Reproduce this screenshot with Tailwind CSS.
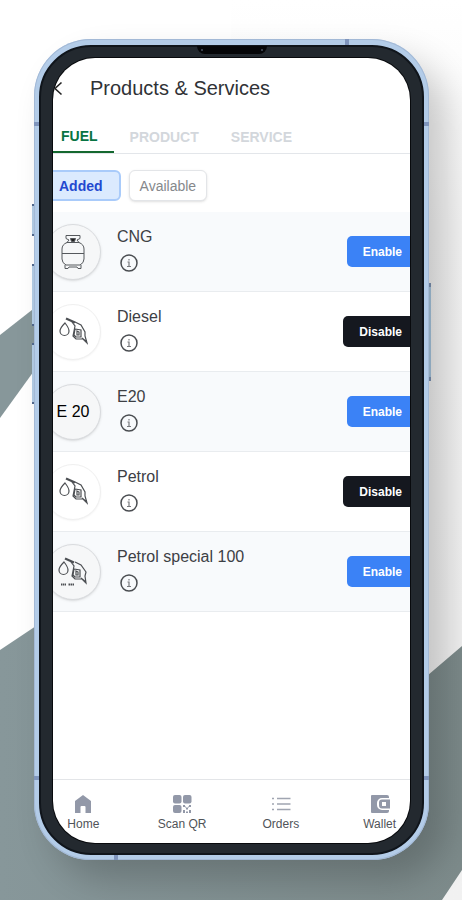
<!DOCTYPE html>
<html lang="en">
<head>
<meta charset="utf-8">
<meta name="viewport" content="width=device-width, initial-scale=1">
<title>Products &amp; Services</title>
<script src="https://cdn.jsdelivr.net/npm/@tailwindcss/browser@4"></script>
</head>
<body class="relative min-h-screen overflow-x-hidden bg-white font-['Liberation_Sans',Arial,sans-serif] text-[#3d4045]">
<svg class="absolute inset-0 h-full w-full" viewBox="0 0 462 900" preserveAspectRatio="none" aria-hidden="true">
  <defs>
    <linearGradient id="page" x1="0" y1="0" x2="0" y2="1"><stop offset="0" stop-color="#fff"/><stop offset="0.25" stop-color="#f6f6f6"/><stop offset="1" stop-color="#f1f1f1"/></linearGradient>
    <linearGradient id="band" x1="0" y1="0" x2="1" y2="0"><stop offset="0" stop-color="#87979a"/><stop offset="1" stop-color="#7d8b8b"/></linearGradient>
  </defs>
  <rect x="231" width="231" height="900" fill="url(#page)"/>
  <path d="M0 335L60 288V335L0 418Z" fill="#87979a"/>
  <path d="M0 650L60 610H400V699L462 646V870L442 900H0Z" fill="url(#band)"/>
</svg>

<main class="relative flex min-h-screen pt-[39px] pr-[33px] pb-10 pl-[34px]">
  <!-- Side keys -->
  <span class="absolute top-[204px] left-8 h-8 w-[3px] border-y-2 border-[#52698f] bg-[#b4cde6]"></span>
  <span class="absolute top-[264px] left-8 h-[62px] w-[3px] border-y-2 border-[#52698f] bg-[#b4cde6]"></span>
  <span class="absolute top-[343px] left-8 h-[61px] w-[3px] border-y-2 border-[#52698f] bg-[#b4cde6]"></span>
  <span class="absolute top-[283px] right-[31px] h-[98px] w-[3px] border-y-4 border-[#7d94b5] bg-[#a9c8e2]"></span>

  <div class="relative flex flex-1 rounded-[57px] bg-[#b3cce8] p-[5px] pt-[6px] shadow-[18px_20px_36px_rgba(0,0,0,0.2)] ring-1 ring-[#a3b9d6] ring-inset">
    <!-- Antenna lines -->
    <span class="absolute top-[83px] left-0 h-1 w-full bg-[#7f95bd]"></span>
    <span class="absolute bottom-20 left-0 h-1 w-full bg-[#7f95bd]"></span>
    <span class="absolute top-0 right-20 h-2 w-1 bg-[#7f95bd]"></span>
    <span class="absolute bottom-0 left-20 h-2 w-1 bg-[#7f95bd]"></span>

    <div class="relative flex flex-1 rounded-[52px] border-2 border-[#10151b] bg-[#23292f] px-3 pt-[11px] pb-[10px]">
      <!-- Speaker and sensors -->
      <div class="absolute -top-px left-1/2 flex h-2 w-[70px] -translate-x-1/2 items-center justify-between rounded-b-lg bg-[#050608] px-1">
        <span class="size-[2px] rounded-full bg-[#4b5563]"></span><span class="size-[2px] rounded-full bg-[#4b5563]"></span>
      </div>

      <div class="flex flex-1 flex-col overflow-hidden rounded-[42px] bg-white ring-1 ring-[#080a0d]">
        <div class="-mx-2 flex flex-1 flex-col">
          <header class="flex h-[60px] items-center">
            <button type="button" aria-label="Back" class="flex w-[45px] justify-start pl-1">
              <svg class="size-4" viewBox="0 0 16 16" fill="none" stroke="#222" stroke-width="1.6"><path d="M12.500 2.500L6 8.500L12.500 14.500"/></svg>
            </button>
            <h1 class="text-xl text-[#303236]">Products &amp; Services</h1>
          </header>

          <nav aria-label="Categories" class="flex h-9 border-b border-[#e3e6ea] text-sm font-bold text-[#d3d7dc]">
            <a href="#fuel" aria-current="page" class="flex items-center border-b-2 border-[#14682f] px-4 pt-[3px] text-[#087443]">FUEL</a>
            <a href="#product" class="flex items-center px-4 pt-[3px]">PRODUCT</a>
            <a href="#service" class="flex items-center px-4 pt-[3px]">SERVICE</a>
          </nav>

          <div class="flex gap-2 pt-4 pb-[11px] text-sm">
            <button type="button" class="h-[31px] rounded-md border-2 border-[#a9cbfa] bg-[#dbeafe] pr-4 pl-3 font-bold text-[#2348cf]">Added</button>
            <button type="button" class="h-[31px] rounded-md border border-[#e3e5e8] bg-white px-[10px] text-[#85888c] shadow-sm">Available</button>
          </div>

          <ul>
            <li class="flex h-20 items-center gap-4 border-b border-[#e9ecef] bg-[#f8fafc]">
              <span class="flex size-14 shrink-0 items-center justify-center rounded-full border border-[#d9dbde] bg-[#f6f7f8] shadow-sm">
                <svg class="h-9 w-7" viewBox="0 0 28 36" fill="none" stroke="#55585c" stroke-width="1"><path d="M7 1.500h14v3l-3 1.500 2 2.500H8l2-2.500-3-1.500ZM8 8.500Q3 10.500 3 15v10q0 4 4 6h14q4-2 4-6v-10q0-4.500-5-6.500M3 19.500h22M6 31v3.500h3l1-1.500h8l1 1.500h3v-3.500"/><path d="M11.500 4.500h5l-1 3h-3Z" fill="#222"/></svg>
              </span>
              <div class="flex flex-1 flex-col gap-1 pb-[6px]">
                <h2 class="text-base">CNG</h2>
                <button type="button" aria-label="About CNG" class="ml-[2px] size-5"><svg class="size-5" viewBox="0 0 20 20" fill="none" stroke="#4a4d51" stroke-width="1.5"><circle cx="10" cy="10" r="8"/><path d="M8.500 9H10v4.500M8 13.500h4M10 6v1.500" stroke="#77797d" stroke-width="1.200"/></svg></button>
              </div>
              <button type="button" class="h-[31px] rounded-[5px] bg-[#3b82f6] px-4 text-xs font-bold text-white">Enable</button>
            </li>

            <li class="flex h-20 items-center gap-4 border-b border-[#e9ecef] bg-white">
              <span class="flex size-14 shrink-0 items-center justify-center rounded-full border border-[#f0f0f0] bg-white shadow-xs">
                <svg class="h-8 w-8" viewBox="0 0 32 32" fill="none" stroke="#4c4f53" stroke-width="1.200"><path d="M8 7Q3 12 3 15a4.500 4.500 0 0 0 9 0Q12 12 8 7Z"/><path d="M9 2.500l9 4" stroke-width="2.200"/><path d="M15 6l3 4-2 10 3 3 7 0 4 4-2-7 0-4-4-7-6-3M18 13l6 1 0 7-5 0-2-2ZM20 15l2 1v3h-2ZM25 22l5 4"/></svg>
              </span>
              <div class="flex flex-1 flex-col gap-1 pb-[6px]">
                <h2 class="text-base">Diesel</h2>
                <button type="button" aria-label="About Diesel" class="ml-[2px] size-5"><svg class="size-5" viewBox="0 0 20 20" fill="none" stroke="#4a4d51" stroke-width="1.5"><circle cx="10" cy="10" r="8"/><path d="M8.500 9H10v4.500M8 13.500h4M10 6v1.500" stroke="#77797d" stroke-width="1.200"/></svg></button>
              </div>
              <button type="button" class="h-[31px] rounded-[5px] bg-[#15181f] px-4 text-xs font-bold text-white">Disable</button>
            </li>

            <li class="flex h-20 items-center gap-4 border-b border-[#e9ecef] bg-[#f8fafc]">
              <span class="flex size-14 shrink-0 items-center justify-center rounded-full border border-[#d9dbde] bg-[#f6f7f8] text-base whitespace-nowrap text-black shadow-sm">E 20</span>
              <div class="flex flex-1 flex-col gap-1 pb-[6px]">
                <h2 class="text-base">E20</h2>
                <button type="button" aria-label="About E20" class="ml-[2px] size-5"><svg class="size-5" viewBox="0 0 20 20" fill="none" stroke="#4a4d51" stroke-width="1.5"><circle cx="10" cy="10" r="8"/><path d="M8.500 9H10v4.500M8 13.500h4M10 6v1.500" stroke="#77797d" stroke-width="1.200"/></svg></button>
              </div>
              <button type="button" class="h-[31px] rounded-[5px] bg-[#3b82f6] px-4 text-xs font-bold text-white">Enable</button>
            </li>

            <li class="flex h-20 items-center gap-4 border-b border-[#e9ecef] bg-white">
              <span class="flex size-14 shrink-0 items-center justify-center rounded-full border border-[#f0f0f0] bg-white shadow-xs">
                <svg class="h-8 w-8" viewBox="0 0 32 32" fill="none" stroke="#4c4f53" stroke-width="1.200"><path d="M8 7Q3 12 3 15a4.500 4.500 0 0 0 9 0Q12 12 8 7Z"/><path d="M9 2.500l9 4" stroke-width="2.200"/><path d="M15 6l3 4-2 10 3 3 7 0 4 4-2-7 0-4-4-7-6-3M18 13l6 1 0 7-5 0-2-2ZM20 15l2 1v3h-2ZM25 22l5 4"/></svg>
              </span>
              <div class="flex flex-1 flex-col gap-1 pb-[6px]">
                <h2 class="text-base">Petrol</h2>
                <button type="button" aria-label="About Petrol" class="ml-[2px] size-5"><svg class="size-5" viewBox="0 0 20 20" fill="none" stroke="#4a4d51" stroke-width="1.5"><circle cx="10" cy="10" r="8"/><path d="M8.500 9H10v4.500M8 13.500h4M10 6v1.500" stroke="#77797d" stroke-width="1.200"/></svg></button>
              </div>
              <button type="button" class="h-[31px] rounded-[5px] bg-[#15181f] px-4 text-xs font-bold text-white">Disable</button>
            </li>

            <li class="flex h-20 items-center gap-4 border-b border-[#e9ecef] bg-[#f8fafc]">
              <span class="flex size-14 shrink-0 flex-col items-center justify-center rounded-full border border-[#d9dbde] bg-[#f6f7f8] shadow-sm">
                <svg class="h-8 w-8" viewBox="0 0 32 32" fill="none" stroke="#4c4f53" stroke-width="1.200"><path d="M7 6Q2 11 2 14a4.500 4.500 0 0 0 9 0Q11 11 7 6Z"/><path d="M8 2.500l9 4" stroke-width="2.200"/><path d="M14 6l3 4-2 10 3 3 7 0 4 4-1-7 1-4-5-7-6-3M17 13l6 1 0 7-5 0-2-2ZM19 15l2 1v3h-2ZM24 22l5 4"/><path d="M4 28.500h5M11.500 28.500h6" stroke-width="2" stroke-dasharray="1.500 0.500"/></svg>
              </span>
              <div class="flex flex-1 flex-col gap-1 pb-[6px]">
                <h2 class="text-base">Petrol special 100</h2>
                <button type="button" aria-label="About Petrol special 100" class="ml-[2px] size-5"><svg class="size-5" viewBox="0 0 20 20" fill="none" stroke="#4a4d51" stroke-width="1.5"><circle cx="10" cy="10" r="8"/><path d="M8.500 9H10v4.500M8 13.500h4M10 6v1.500" stroke="#77797d" stroke-width="1.200"/></svg></button>
              </div>
              <button type="button" class="h-[31px] rounded-[5px] bg-[#3b82f6] px-4 text-xs font-bold text-white">Enable</button>
            </li>
          </ul>

          <nav aria-label="Main" class="-mx-[11px] mt-auto grid h-16 grid-cols-4 border-t border-[#e3e5e8] pt-[14px] text-xs text-[#505358]">
            <a href="#home" class="flex flex-col items-center gap-[2px]">
              <svg class="size-5" viewBox="0 0 20 20" fill="#9298a8"><path d="M10 1L18 7V19H12.500V13a1 1 0 0 0-1-1h-3a1 1 0 0 0-1 1v6H2V7Z"/></svg>Home
            </a>
            <a href="#scan" class="flex flex-col items-center gap-[2px]">
              <svg class="size-5" viewBox="0 0 20 20" fill="#9298a8"><rect x="1" y="1" width="8.500" height="8.500" rx="2"/><rect x="11" y="1" width="8.500" height="8.500" rx="2"/><rect x="1" y="11" width="8.500" height="8" rx="2"/><path d="M11 11h2v2h-2ZM17 11h2v2h-2ZM14 13.500h2v2h-2ZM11 16h2v3h-2ZM17 16h2v3h-2ZM14 17.500h2v1.500h-2ZM13 12.500h1v1h-1ZM16 12.500h1v1h-1Z"/></svg>Scan QR
            </a>
            <a href="#orders" class="flex flex-col items-center gap-[2px]">
              <svg class="size-5" viewBox="0 0 20 20" stroke="#a0a5b1" stroke-width="1.500"><path d="M6 4.500h13.500M6 10h13.500M6 15.500h13.500M1 4.500h2M1 10h2M1 15.500h2"/></svg>Orders
            </a>
            <a href="#wallet" class="flex flex-col items-center gap-[2px]">
              <svg class="size-5" viewBox="0 0 20 20" fill="#9298a8"><path d="M2 1H17a2 2 0 0 1 2 2v1H12a5 5 0 0 0-5 5v2a5 5 0 0 0 5 5h7v1a2 2 0 0 1-2 2H2a1 1 0 0 1-1-1V2a1 1 0 0 1 1-1Z"/><path fill-rule="evenodd" d="M12 5.500h8v9h-8a3 3 0 0 1-3-3v-3a3 3 0 0 1 3-3ZM12 8v4h4V8Z"/></svg>Wallet
            </a>
          </nav>
        </div>
      </div>
    </div>
  </div>
</main>
</body>
</html>
